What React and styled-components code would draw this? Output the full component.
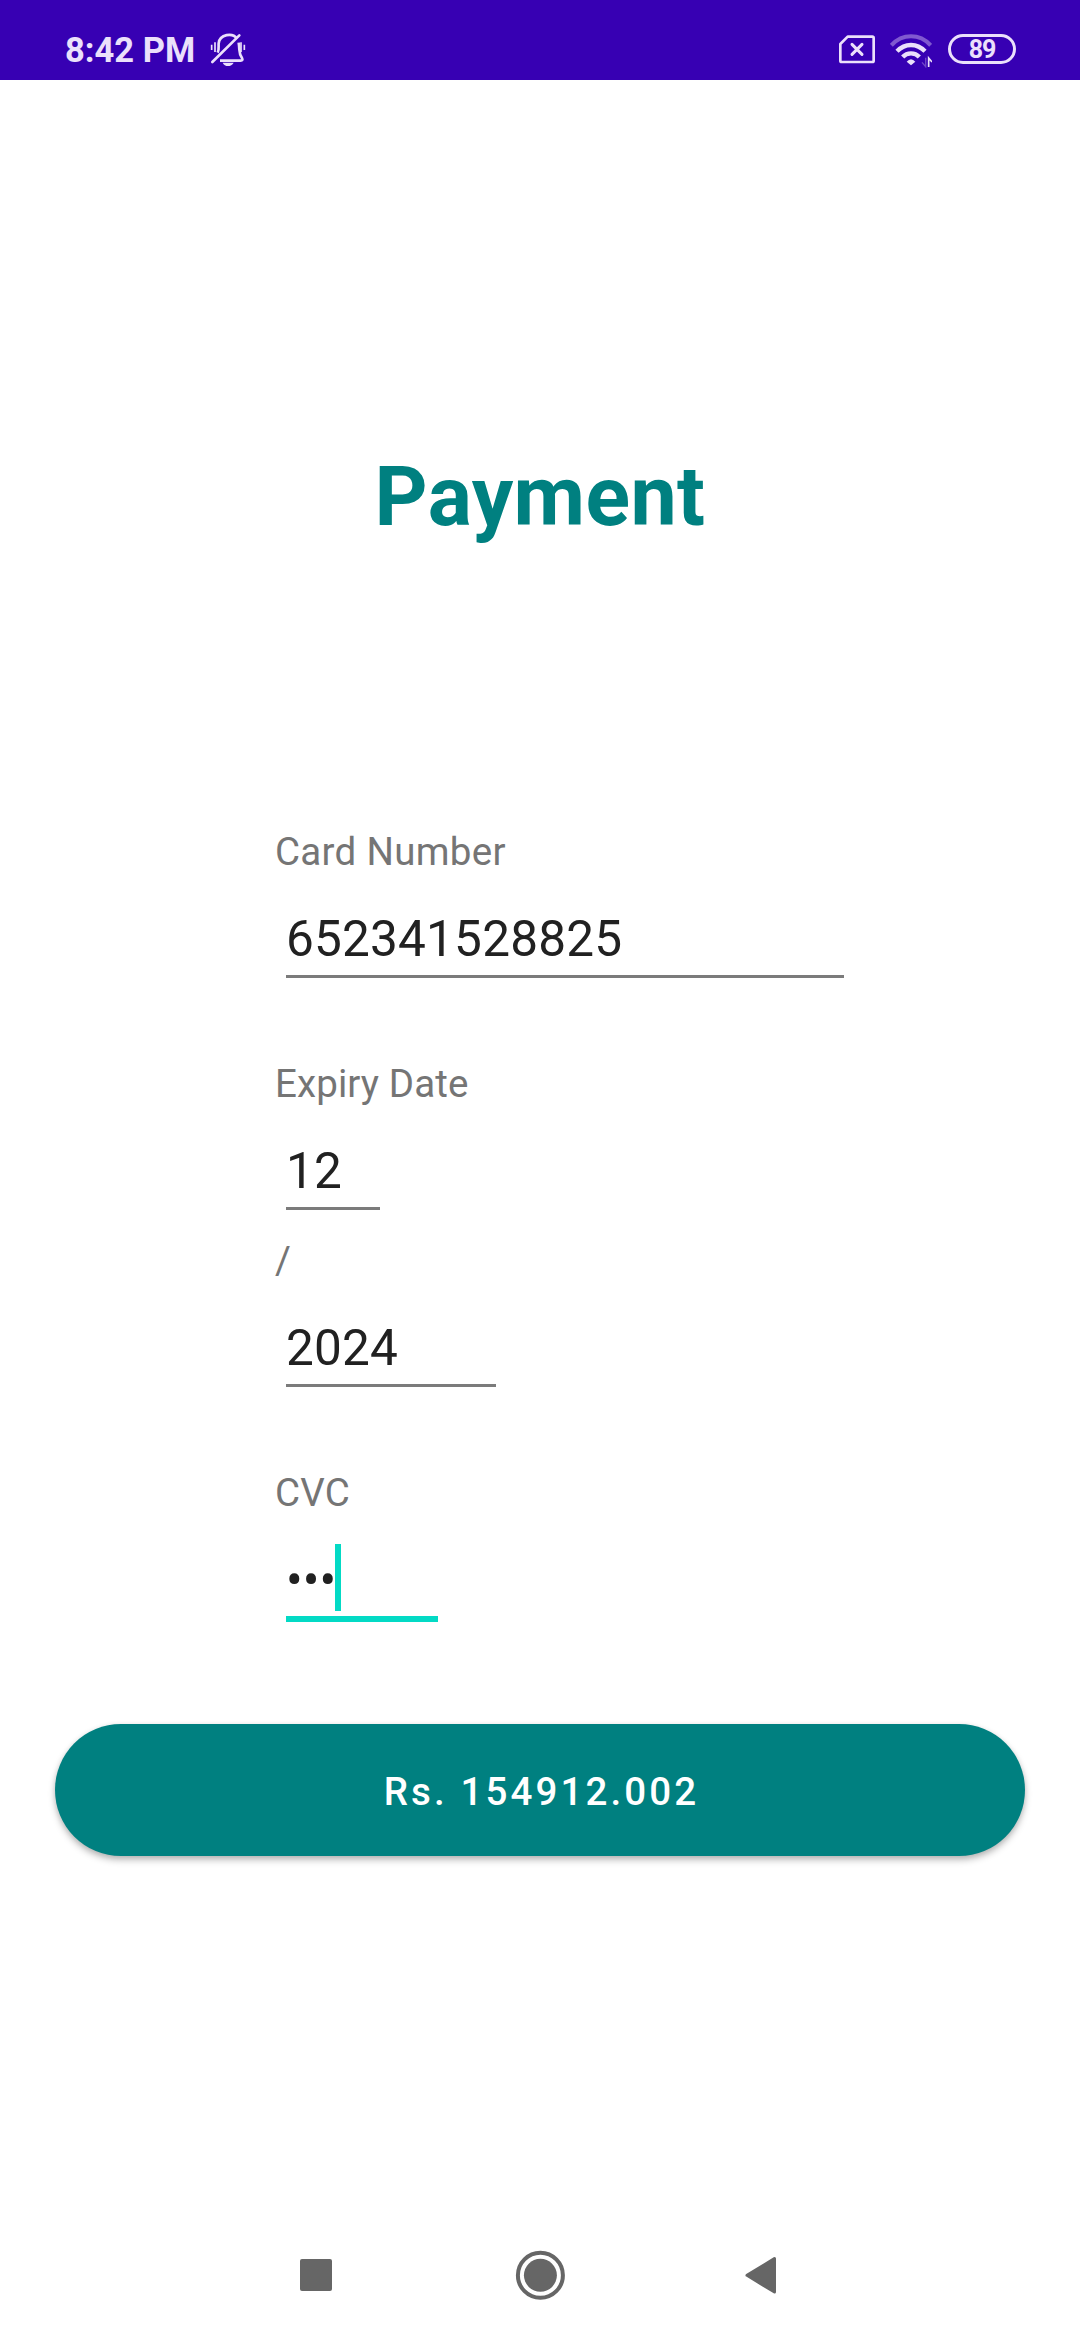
import React from "react";
import styled, { createGlobalStyle } from "styled-components";

const Global = createGlobalStyle`
  *, *::before, *::after { box-sizing: border-box; }
  body { margin: 0; background: #fff; font-family: Roboto, "Liberation Sans", sans-serif; }
`;

const Screen = styled.div`
  width: 1080px;
  height: 2340px;
  display: flex;
  flex-direction: column;
  background: #fff;
  overflow: hidden;
`;

const StatusBar = styled.header`
  height: 80px;
  flex: none;
  display: flex;
  align-items: flex-start;
  justify-content: space-between;
  padding: 30px 64px 0 65px;
  background: #3700b3;
  color: #ebe0fb;
`;

const StatusGroup = styled.div`
  display: flex;
  align-items: flex-start;
`;

const Clock = styled.span`
  width: 145px;
  font-size: 34.5px;
  font-weight: 700;
  line-height: 40px;
  white-space: nowrap;
`;

const Icon = styled.svg`
  display: block;
  flex: none;
  margin-top: ${(p) => p.$top || 0}px;
  margin-right: ${(p) => p.$gap || 0}px;
`;

const Battery = styled.div`
  width: 68px;
  height: 30px;
  margin-top: 4px;
  padding-top: 1px;
  border: 3px solid #ebe0fb;
  border-radius: 15px;
  display: flex;
  align-items: center;
  justify-content: center;
  font-size: 25px;
  font-weight: 700;
  line-height: 24px;
  letter-spacing: -1.2px;
`;

const Title = styled.h1`
  margin: 367px 0 0;
  color: #008080;
  font-size: 82.5px;
  font-weight: 700;
  line-height: 100px;
  letter-spacing: 0.4px;
  text-align: center;
`;

const Form = styled.form`
  display: flex;
  flex-direction: column;
  margin-top: 279px;
`;

const Fields = styled.div`
  display: flex;
  flex-direction: column;
  gap: 80px;
  padding-left: 275px;
`;

const Group = styled.div`
  display: flex;
  flex-direction: column;
  align-items: flex-start;
`;

const Label = styled.label`
  margin-bottom: 28px;
  color: #757575;
  font-size: 38.5px;
  line-height: 52px;
  letter-spacing: ${(p) => p.$tracking || 0}px;
  white-space: nowrap;
`;

const Slash = styled(Label)`
  margin-top: 25px;
`;

const Field = styled.div`
  width: ${(p) => p.$width}px;
  height: ${(p) => (p.$focused ? 75 : 72)}px;
  margin-left: 11px;
  display: flex;
  align-items: flex-start;
  border-bottom: ${(p) => (p.$focused ? "6px solid #03dac5" : "3px solid #7b7b7b")};
  color: #212121;
  font-size: 49.5px;
  line-height: 66px;
  letter-spacing: ${(p) => p.$tracking || 0}px;
  white-space: nowrap;
`;

const Caret = styled.i`
  width: 6px;
  height: 67px;
  margin: -3px 0 0 -1px;
  background: #03dac5;
`;

const PayButton = styled.button`
  width: 970px;
  height: 132px;
  margin: 102px auto 0;
  padding: 3px 0 0 3px;
  border: 0;
  border-radius: 66px;
  background: #008080;
  color: #fff;
  font: 500 38.5px/52px Roboto, "Liberation Sans", sans-serif;
  letter-spacing: 3.12px;
  box-shadow: 0 4px 7px rgba(0, 0, 0, 0.26), 0 1px 5px rgba(0, 0, 0, 0.08);
`;

const NavBar = styled.nav`
  height: 130px;
  margin-top: auto;
  padding-left: 300px;
  display: flex;
  align-items: center;
`;

const Muted = () => (
  <Icon $top={2} width="36" height="36" viewBox="510 96 108 108" fill="none" stroke="#ebe0fb" strokeWidth="8">
    <path d="M533 158C538 149 535 138 536 130C539 102 578 97 591 116" />
    <path d="M596 128C600 154 595 158 606 174Q610 182 602 182H540" strokeLinejoin="round" />
    <path d="M517 186L598 106" strokeLinecap="round" />
    <path d="M515 134V150M525 127V156M603 127V156M613 134V150" strokeWidth="5" />
    <path d="M548 188H581Q575 198 564 198Q553 198 548 188Z" fill="#ebe0fb" stroke="none" />
  </Icon>
);

const NoSim = () => (
  <Icon $top={4} $gap={15} width="36" height="30" viewBox="57 101 108 90" fill="none" stroke="#ebe0fb" strokeWidth="8">
    <path d="M83 109H157Q161 109 161 113V181Q161 185 157 185H65Q61 185 61 181V131Z" strokeLinejoin="round" />
    <path d="M96 132L126 162M126 132L96 162" strokeLinecap="round" strokeWidth="9" />
  </Icon>
);

const Wifi = () => (
  <Icon $top={4} $gap={16} width="42" height="34" viewBox="210 101 126 102" fill="none" stroke="#ebe0fb" strokeWidth="13">
    <path d="M214 135Q239 108 273 108T332 135" stroke="#8059d0" strokeWidth="12" />
    <path d="M231 153Q249 134 273 134T315 153" />
    <path d="M248 170Q258 159 273 159T298 170" />
    <path d="M260 184Q273 169 286 184L273 195Z" fill="#ebe0fb" stroke="none" />
    <path d="M317 172V199L306 186" stroke="#7047c8" strokeWidth="4" />
    <path d="M326 200V173L336 185" strokeWidth="5" />
  </Icon>
);

export default function App() {
  return (
    <Screen>
      <Global />
      <StatusBar>
        <StatusGroup>
          <Clock>8:42 PM</Clock>
          <Muted />
        </StatusGroup>
        <StatusGroup>
          <NoSim />
          <Wifi />
          <Battery>89</Battery>
        </StatusGroup>
      </StatusBar>
      <Title>Payment</Title>
      <Form>
        <Fields>
          <Group>
            <Label $tracking={0.3}>Card Number</Label>
            <Field $width={558} $tracking={0.2}>652341528825</Field>
          </Group>
          <Group>
            <Label $tracking={0.1}>Expiry Date</Label>
            <Field $width={94} $tracking={0.2}>12</Field>
            <Slash>/</Slash>
            <Field $width={210} $tracking={0.2}>2024</Field>
          </Group>
          <Group>
            <Label $tracking={0.2}>CVC</Label>
            <Field $width={152} $focused>
              •••
              <Caret />
            </Field>
          </Group>
        </Fields>
        <PayButton type="button">Rs. 154912.002</PayButton>
      </Form>
      <NavBar>
        <Icon $gap={183} width="32" height="32" viewBox="0 0 32 32">
          <rect width="32" height="32" rx="2" fill="#666" />
        </Icon>
        <Icon $gap={180} width="50" height="50" viewBox="0 0 50 50">
          <circle cx="25.4" cy="25.3" r="22.5" fill="none" stroke="#666" strokeWidth="4" />
          <circle cx="25.4" cy="25.3" r="16.5" fill="#666" />
        </Icon>
        <Icon width="32" height="38" viewBox="0 0 32 38">
          <path d="M2 19.3L29.5 2.5V36Z" fill="#666" stroke="#666" strokeWidth="3" strokeLinejoin="round" />
        </Icon>
      </NavBar>
    </Screen>
  );
}
